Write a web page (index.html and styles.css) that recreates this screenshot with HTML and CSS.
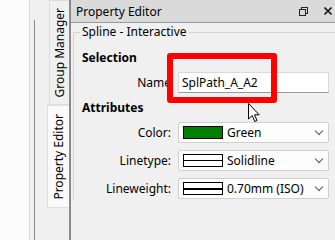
FILE: index.html
```html
<!DOCTYPE html>
<html lang="en">
<head>
    <meta charset="UTF-8">
    <title>Property Editor</title>
    <link rel="stylesheet" href="styles.css">
</head>
<body>
    <div class="app">
        <div class="side">
            <div class="side-list"></div>
            <div class="side-split"></div>
        </div>

        <div class="tabs">
            <div class="tab"><span>Group Manager</span></div>
            <div class="tab active"><span>Property Editor</span></div>
        </div>

        <div class="panel">
            <div class="title">
                <span>Property Editor</span>
                <div class="title-icons">
                    <svg width="9" height="9" viewBox="0 0 9 9">
                        <rect x="2.5" y="0.5" width="6" height="6" fill="none" stroke="#222"/>
                        <rect x="0.5" y="2.5" width="6" height="6" fill="#dadada" stroke="#222"/>
                    </svg>
                    <svg width="8" height="8" viewBox="0 0 8 8">
                        <path d="M0.5 0.5 L7.5 7.5 M7.5 0.5 L0.5 7.5" stroke="#222" stroke-width="1.6"/>
                    </svg>
                </div>
            </div>

            <div class="group">
                <div class="legend">Spline - Interactive</div>

                <div class="heading first">Selection</div>
                <div class="row">
                    <label>Name</label>
                    <div class="input">SplPath_A_A2</div>
                </div>

                <div class="heading">Attributes</div>
                <div class="row">
                    <label>Color:</label>
                    <div class="combo">
                        <span class="swatch green"></span>
                        <span class="value">Green</span>
                        <span class="chevron"></span>
                    </div>
                </div>
                <div class="row">
                    <label>Linetype:</label>
                    <div class="combo">
                        <span class="swatch line thin"></span>
                        <span class="value">Solidline</span>
                        <span class="chevron"></span>
                    </div>
                </div>
                <div class="row">
                    <label>Lineweight:</label>
                    <div class="combo">
                        <span class="swatch line thick"></span>
                        <span class="value">0.70mm (ISO)</span>
                        <span class="chevron"></span>
                    </div>
                </div>
            </div>

            <!-- highlight around the name field -->
            <div class="highlight"></div>
            <svg class="cursor" width="12" height="20" viewBox="0 0 12 20">
                <path d="M0.5 0.5 L0.5 16 L4.2 12.5 L6.8 18.5 L9 17.5 L6.5 11.8 L11.2 11.8 Z" fill="#fff" stroke="#000" stroke-width="1"/>
            </svg>
        </div>
    </div>
</body>
</html>
```

FILE: styles.css
```css
* {
    box-sizing: border-box;
}

body {
    margin: 0;
    font-family: "Noto Sans", "Open Sans", sans-serif;
    font-size: 12px;
    color: #000;
    background-color: #f0f0f0;
}

.app {
    display: flex;
    height: 240px;
    overflow: hidden;
}

.side {
    width: 47px;
    display: flex;
    background-color: #f0f0f0;
}

.side-list {
    width: 30px;
    background-color: #fcfcfc;
    border-right: 1px solid #dcdcdc;
}

.side-split {
    width: 1px;
    margin: 20px 0 0 4px;
    background-color: #8a8a8a;
}

.tabs {
    width: 24px;
    display: flex;
    flex-direction: column;
    border-right: 2px solid #8a8a8a;
}

.tab {
    height: 105px;
    display: flex;
    align-items: center;
    justify-content: center;
    background-color: #f0f0f0;
    border: 1px solid #dcdcdc;
    border-right: none;
    margin-left: 2px;
}

.tab.active {
    height: 103px;
    margin-left: 0;
    background-color: #fafafa;
    border-color: #e0e0e0;
}

.tab span {
    writing-mode: vertical-rl;
    transform: rotate(180deg);
    white-space: nowrap;
}

.panel {
    flex: 1;
    position: relative;
    background-color: #f0f0f0;
}

.title {
    height: 23px;
    display: flex;
    align-items: center;
    justify-content: space-between;
    padding: 0 3px 0 5px;
    background-color: #dadada;
    border-bottom: 1px solid #9a9a9a;
}

.title-icons {
    display: flex;
    gap: 16px;
    align-items: center;
}

.title-icons svg {
    display: block;
}

.group {
    margin: 9px 0 0 2px;
    border-top: 1px solid #d4d4d4;
    border-left: 1px solid #d4d4d4;
    padding: 0 6px 0 8px;
}

.legend {
    width: fit-content;
    margin: -9px 0 0 -2px;
    padding: 0 2px;
    line-height: 16px;
    background-color: #f0f0f0;
}

.heading {
    font-weight: bold;
    line-height: 16px;
    margin: 7px 0 6px;
}

.heading.first {
    margin-top: 10px;
}

.row {
    display: grid;
    grid-template-columns: 89px 151px;
    column-gap: 7px;
    align-items: center;
    margin-bottom: 7px;
}

.row label {
    text-align: right;
}

.input {
    height: 21px;
    line-height: 19px;
    padding: 0 3px;
    background-color: #fff;
    border: 1px solid #d9d9d9;
    border-bottom-color: #9a9a9a;
}

.combo {
    height: 21px;
    display: flex;
    align-items: center;
    padding: 0 4px;
    background-color: #fdfdfd;
    border: 1px solid #d0d0d0;
    border-radius: 2px;
}

.swatch {
    width: 40px;
    height: 13px;
    border: 1px solid #000;
    margin-right: 4px;
    flex-shrink: 0;
}

.swatch.green {
    background-color: #008000;
}

.swatch.line {
    background: #fff linear-gradient(#000, #000) no-repeat 0 50% / 100% 1px;
}

.swatch.thick {
    background-size: 100% 2px;
}

.value {
    flex: 1;
    white-space: nowrap;
}

.chevron {
    width: 6px;
    height: 6px;
    border-right: 1px solid #555;
    border-bottom: 1px solid #555;
    transform: rotate(45deg);
    margin: -4px 2px 0 0;
}

.highlight {
    position: absolute;
    left: 96px;
    top: 53px;
    width: 110px;
    height: 50px;
    border: 6px solid #ff0000;
    border-radius: 3px;
}

.cursor {
    position: absolute;
    left: 177px;
    top: 103px;
}
```
